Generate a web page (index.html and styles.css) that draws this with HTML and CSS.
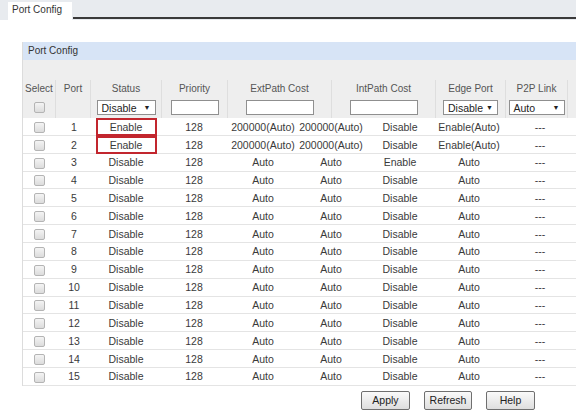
FILE: index.html
```html
<!DOCTYPE html>
<html lang="en">
<head>
    <meta charset="UTF-8">
    <title>Port Config</title>
    <link rel="stylesheet" href="styles.css">
</head>
<body>
    <div class="tabbar">
        <div class="tab">Port Config</div>
        <div class="tab-line"></div>
    </div>

    <div class="panel">
        <div class="panel-title">Port Config</div>
        <div class="panel-gap"></div>

        <!-- cabecalho -->
        <div class="row head">
            <div>Select</div>
            <div>Port</div>
            <div>Status</div>
            <div>Priority</div>
            <div>ExtPath Cost</div>
            <div>IntPath Cost</div>
            <div>Edge Port</div>
            <div>P2P Link</div>
            <div></div>
        </div>
        <div class="row head filter">
            <div><span class="chk"></span></div>
            <div></div>
            <div><span class="dd dd-status">Disable<i>&#9660;</i></span></div>
            <div><span class="txt txt-pri"></span></div>
            <div><span class="txt txt-cost"></span></div>
            <div><span class="txt txt-cost"></span></div>
            <div><span class="dd dd-edge">Disable<i>&#9660;</i></span></div>
            <div><span class="dd dd-p2p">Auto<i>&#9660;</i></span></div>
            <div><span class="txt txt-more"></span></div>
        </div>

        <div id="rows"></div>
    </div>

    <div class="actions">
        <button>Apply</button>
        <button>Refresh</button>
        <button>Help</button>
    </div>

    <script>
        // linhas da tabela de portas
        const portas = [
            [1, 'Enable', '200000(Auto)', '200000(Auto)', 'Disable', 'Enable(Auto)', true],
            [2, 'Enable', '200000(Auto)', '200000(Auto)', 'Disable', 'Enable(Auto)', true],
            [3, 'Disable', 'Auto', 'Auto', 'Enable', 'Auto'],
            [4, 'Disable', 'Auto', 'Auto', 'Disable', 'Auto'],
            [5, 'Disable', 'Auto', 'Auto', 'Disable', 'Auto'],
            [6, 'Disable', 'Auto', 'Auto', 'Disable', 'Auto'],
            [7, 'Disable', 'Auto', 'Auto', 'Disable', 'Auto'],
            [8, 'Disable', 'Auto', 'Auto', 'Disable', 'Auto'],
            [9, 'Disable', 'Auto', 'Auto', 'Disable', 'Auto'],
            [10, 'Disable', 'Auto', 'Auto', 'Disable', 'Auto'],
            [11, 'Disable', 'Auto', 'Auto', 'Disable', 'Auto'],
            [12, 'Disable', 'Auto', 'Auto', 'Disable', 'Auto'],
            [13, 'Disable', 'Auto', 'Auto', 'Disable', 'Auto'],
            [14, 'Disable', 'Auto', 'Auto', 'Disable', 'Auto'],
            [15, 'Disable', 'Auto', 'Auto', 'Disable', 'Auto']
        ];

        const rows = document.getElementById('rows');
        portas.forEach(p => {
            const status = p[6] ? `<span class="mark">${p[1]}</span>` : p[1];
            rows.insertAdjacentHTML('beforeend', `
                <div class="row data">
                    <div><span class="chk"></span></div>
                    <div>${p[0]}</div>
                    <div>${status}</div>
                    <div>128</div>
                    <div>${p[2]}</div>
                    <div>${p[3]}</div>
                    <div>${p[4]}</div>
                    <div>${p[5]}</div>
                    <div>---</div>
                </div>`);
        });
    </script>
</body>
</html>
```

FILE: styles.css
```css
* {
    margin: 0;
    padding: 0;
    box-sizing: border-box;
}

body {
    font-family: "Liberation Sans", Arial, sans-serif;
    font-size: 10.5px;
    color: #3a3a3a;
    background-color: #fff;
    width: 576px;
    height: 415px;
    overflow: hidden;
}

/* aba superior */
.tabbar {
    display: flex;
    align-items: flex-end;
    height: 20px;
    background-color: #e8ebef;
}

.tab {
    width: 64px;
    height: 18px;
    margin-left: 8px;
    padding: 2px 0 0 4px;
    background-color: #fff;
    font-size: 10px;
    color: #333;
}

.tab-line {
    flex: 1;
    height: 2px;
    margin-bottom: 1px;
    margin-left: 1px;
    background-color: #3a3a3a;
}

/* painel */
.panel {
    margin: 22px 0 0 22px;
    width: 554px;
    overflow: hidden;
    border-left: 1px solid #dcdcdc;
}

.panel-title {
    height: 18px;
    padding: 3px 0 0 5px;
    background-color: #d7e4f6;
    font-size: 10px;
    color: #333;
}

.panel-gap {
    height: 20px;
    background-color: #eeeeee;
}

.row {
    display: grid;
    align-items: center;
    text-align: center;
}

.row.head {
    grid-template-columns: 33px 35px 71px 66px 104px 104px 70px 62px 50px;
    height: 17px;
    background-color: #eeeeee;
    font-size: 10px;
    color: #555;
}

.row.head > div {
    height: 100%;
    display: flex;
    align-items: center;
    justify-content: center;
    border-right: 1px solid #dedede;
}

.row.filter {
    height: 21px;
}

.row.data {
    grid-template-columns: 33px 36px 68px 68px 70px 66px 72px 66px 76px;
    height: 17.86px;
    border-bottom: 1px solid #e4e4e4;
    background-color: #fff;
}

.chk {
    display: inline-block;
    width: 11px;
    height: 11px;
    border: 1px solid #b4b4b4;
    border-radius: 2px;
    background: linear-gradient(#f4f4f4, #dcdcdc);
    vertical-align: middle;
}

.dd, .txt {
    display: inline-block;
    height: 15px;
    border: 1px solid #8f8f8f;
    background-color: #fff;
}

.dd {
    display: inline-flex;
    align-items: center;
    justify-content: space-between;
    padding: 0 4px;
    font-size: 10.5px;
    color: #222;
}

.dd i {
    font-style: normal;
    font-size: 7px;
}

.dd-status { width: 59px; }
.dd-edge { width: 55px; }
.dd-p2p { width: 56px; }

.txt-pri { width: 48px; }
.txt-cost { width: 68px; }
.txt-more { width: 10px; margin-left: 20px; }

.mark {
    display: inline-block;
    width: 61px;
    height: 18px;
    line-height: 15px;
    border: 2px solid #c2262e;
}

/* botoes */
.actions {
    display: flex;
    gap: 14px;
    margin: 5px 0 0 361px;
}

.actions button {
    height: 19px;
    padding: 0;
    font-family: "Liberation Sans", Arial, sans-serif;
    font-size: 10.5px;
    color: #222;
    border: 1px solid #6f6f6f;
    border-radius: 2px;
    background: linear-gradient(#fafafa, #dedede);
}

.actions button:nth-child(1) { width: 49px; }
.actions button:nth-child(2) { width: 48px; }
.actions button:nth-child(3) { width: 49px; }
```
